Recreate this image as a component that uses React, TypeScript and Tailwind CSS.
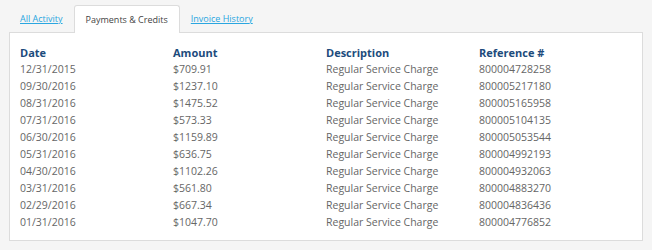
const rows = [
  ["12/31/2015", "$709.91", "Regular Service Charge", "800004728258"],
  ["09/30/2016", "$1237.10", "Regular Service Charge", "800005217180"],
  ["08/31/2016", "$1475.52", "Regular Service Charge", "800005165958"],
  ["07/31/2016", "$573.33", "Regular Service Charge", "800005104135"],
  ["06/30/2016", "$1159.89", "Regular Service Charge", "800005053544"],
  ["05/31/2016", "$636.75", "Regular Service Charge", "800004992193"],
  ["04/30/2016", "$1102.26", "Regular Service Charge", "800004932063"],
  ["03/31/2016", "$561.80", "Regular Service Charge", "800004883270"],
  ["02/29/2016", "$667.34", "Regular Service Charge", "800004836436"],
  ["01/31/2016", "$1047.70", "Regular Service Charge", "800004776852"],
];

const headers = ["Date", "Amount", "Description", "Reference #"];

export default function App() {
  return (
    <div
      className="w-[652px] h-[250px] bg-[#f5f5f5] pt-[5px] px-[9px] text-[10.5px]"
      style={{ fontFamily: '"Open Sans", sans-serif' }}
    >
      <div className="flex h-[27px] items-stretch text-[9px]">
        <a href="#" className="flex items-center px-[11px] text-[#2aa6e0] underline">
          All Activity
        </a>
        <div className="relative z-10 -mb-px flex items-center px-[11px] bg-white border border-b-0 border-[#dcdcdc] rounded-t-[3px] text-[#444]">
          Payments &amp; Credits
        </div>
        <a href="#" className="flex items-center px-[11px] text-[#2aa6e0] underline">
          Invoice History
        </a>
      </div>
      <div className="bg-white border border-[#dcdcdc] pt-[11px] pb-[9px] px-[10px]">
        <div className="grid grid-cols-4 leading-[17px] font-bold text-[#1c4b7c] text-[11px]">
          {headers.map((h) => (
            <div key={h}>{h}</div>
          ))}
        </div>
        {rows.map((r, i) => (
          <div key={i} className="grid grid-cols-4 leading-[17px] text-[#666]">
            {r.map((c, j) => (
              <div key={j}>{c}</div>
            ))}
          </div>
        ))}
      </div>
    </div>
  );
}
